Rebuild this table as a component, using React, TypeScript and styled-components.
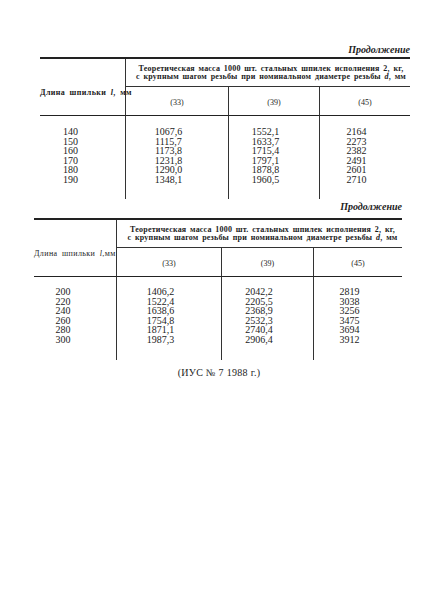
import styled, { createGlobalStyle } from "styled-components";

const GlobalStyle = createGlobalStyle`
  html, body {
    margin: 0;
    padding: 0;
    background: #ffffff;
  }
  body {
    font-family: "Liberation Serif", "DejaVu Serif", serif;
    color: #1c1c1c;
    -webkit-font-smoothing: antialiased;
  }
  * {
    box-sizing: border-box;
  }
`;

const Sheet = styled.div`
  width: 443px;
  height: 609px;
  padding-top: 44px;
  display: flex;
  flex-direction: column;
`;

const Block = styled.section<{ $left: number; $width: number; $top: number }>`
  margin-left: ${(p) => p.$left}px;
  margin-top: ${(p) => p.$top}px;
  width: ${(p) => p.$width}px;
`;

const Caption = styled.div<{ $gap: number }>`
  text-align: right;
  font-style: italic;
  font-weight: bold;
  font-size: 10px;
  line-height: 12px;
  margin-bottom: ${(p) => p.$gap}px;
`;

const Grid = styled.div<{ $cols: string }>`
  display: grid;
  grid-template-columns: ${(p) => p.$cols};
  grid-template-rows: 28px 29px 83px;
  border-top: 2px solid #222;
`;

const LengthHead = styled.div<{ $bold: boolean }>`
  grid-row: 1 / 3;
  grid-column: 1;
  border-right: 1px solid #333;
  border-bottom: 1.5px solid #222;
  display: flex;
  align-items: center;
  padding-top: 10px;
  font-size: 8px;
  letter-spacing: 0.4px;
  word-spacing: 2px;
  font-weight: ${(p) => (p.$bold ? "bold" : "normal")};
  white-space: nowrap;
`;

const TitleCell = styled.div`
  grid-row: 1;
  grid-column: 2 / 5;
  border-bottom: 1px solid #333;
  display: flex;
  flex-direction: column;
  justify-content: center;
  align-items: center;
  font-size: 8px;
  font-weight: 600;
  line-height: 8px;
  word-spacing: 1.5px;
  letter-spacing: 0.2px;
  white-space: nowrap;
  padding-left: 6px;
`;

const SubCell = styled.div<{ $last?: boolean }>`
  grid-row: 2;
  border-right: ${(p) => (p.$last ? "none" : "1px solid #333")};
  border-bottom: 1.5px solid #222;
  display: flex;
  align-items: center;
  justify-content: center;
  font-size: 8px;
  padding-top: 2px;
`;

const BodyCell = styled.div<{ $last?: boolean; $shift: number; $pad: number }>`
  grid-row: 3;
  border-right: ${(p) => (p.$last ? "none" : "1px solid #333")};
  padding-top: ${(p) => p.$pad}px;
  padding-right: ${(p) => p.$shift}px;
  display: flex;
  flex-direction: column;
  align-items: center;
  font-size: 10px;
  line-height: 9.6px;
`;

const Footnote = styled.div`
  margin-top: 7px;
  text-align: center;
  padding-right: 5px;
  font-size: 10px;
  line-height: 12px;
  letter-spacing: 0.3px;
`;

type TableData = {
  left: number;
  top: number;
  cols: number[];
  gap: number;
  pad: number;
  bold: boolean;
  lengthLabel: string;
  rows: [string, string, string, string][];
};

const tables: TableData[] = [
  {
    left: 40,
    top: 0,
    cols: [86, 103, 91, 90],
    gap: 1,
    pad: 11,
    bold: true,
    lengthLabel: ", мм",
    rows: [
      ["140", "1067,6", "1552,1", "2164"],
      ["150", "1115,7", "1633,7", "2273"],
      ["160", "1173,8", "1715,4", "2382"],
      ["170", "1231,8", "1797,1", "2491"],
      ["180", "1290,0", "1878,8", "2601"],
      ["190", "1348,1", "1960,5", "2710"],
    ],
  },
  {
    left: 34,
    top: 2,
    cols: [83, 105, 92, 88],
    gap: 5,
    pad: 10,
    bold: false,
    lengthLabel: ",мм",
    rows: [
      ["200", "1406,2", "2042,2", "2819"],
      ["220", "1522,4", "2205,5", "3038"],
      ["240", "1638,6", "2368,9", "3256"],
      ["260", "1754,8", "2532,3", "3475"],
      ["280", "1871,1", "2740,4", "3694"],
      ["300", "1987,3", "2906,4", "3912"],
    ],
  },
];

function MassTable({ t }: { t: TableData }) {
  const width = t.cols.reduce((a, b) => a + b, 0);
  return (
    <Block $left={t.left} $width={width} $top={t.top}>
      <Caption $gap={t.gap}>Продолжение</Caption>
      <Grid $cols={t.cols.map((c) => `${c}px`).join(" ")}>
        <LengthHead $bold={t.bold}>
          Длина шпильки <i>&nbsp;l</i>
          {t.lengthLabel}
        </LengthHead>
        <TitleCell>
          <span>Теоретическая масса 1000 шт. стальных шпилек исполнения 2, кг,</span>
          <span>
            с крупным шагом резьбы при номинальном диаметре резьбы <i>d</i>, мм
          </span>
        </TitleCell>
        <SubCell>(33)</SubCell>
        <SubCell>(39)</SubCell>
        <SubCell $last>(45)</SubCell>
        {[0, 1, 2, 3].map((c) => (
          <BodyCell key={c} $last={c === 3} $shift={c === 0 ? 24 : 17} $pad={t.pad}>
            {t.rows.map((r) => (
              <span key={r[0]}>{r[c]}</span>
            ))}
          </BodyCell>
        ))}
      </Grid>
    </Block>
  );
}

export default function App() {
  return (
    <>
      <GlobalStyle />
      <Sheet>
        {tables.map((t, i) => (
          <MassTable key={i} t={t} />
        ))}
        <Footnote>(ИУС № 7 1988 г.)</Footnote>
      </Sheet>
    </>
  );
}
